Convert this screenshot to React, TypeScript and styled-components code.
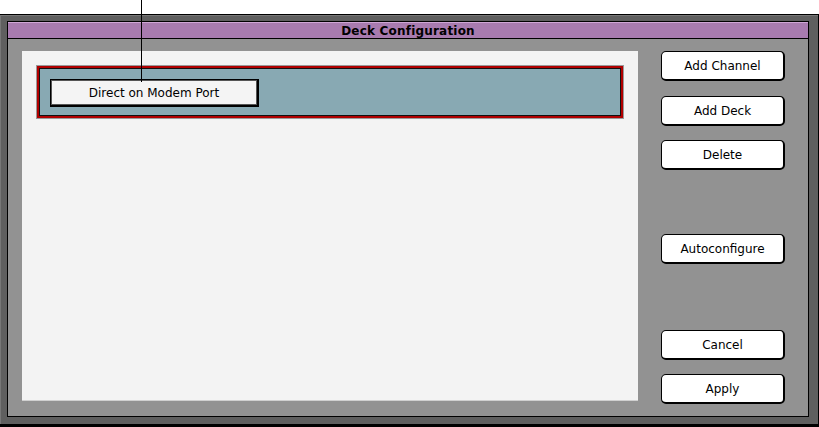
import React from "react";
import styled, { createGlobalStyle } from "styled-components";

const Global = createGlobalStyle`
  html, body { margin: 0; padding: 0; background: #ffffff; }
  body { font-family: "DejaVu Sans", "Liberation Sans", sans-serif; }
  * { box-sizing: border-box; }
`;

const Page = styled.div`
  position: relative;
  width: 819px;
  height: 427px;
  padding-top: 14px;
  overflow: hidden;
`;

const Callout = styled.div`
  position: absolute;
  left: 141px;
  top: 0;
  width: 1px;
  height: 82px;
  background: #000;
  z-index: 2;
`;

const OuterFrame = styled.div`
  width: 819px;
  height: 413px;
  background: #5f5f5f;
  border-top: 1px solid #000;
  border-right: 1px solid #000;
  border-bottom: 3px solid #000;
  padding: 6px 9px 7px 7px;
  box-shadow: inset 1px 0 0 #777, inset 0 1px 0 #777;
`;

const Window = styled.div`
  height: 100%;
  border: 1px solid #000;
  display: flex;
  flex-direction: column;
  background: #929292;
`;

const TitleBar = styled.div`
  height: 19px;
  background: #a87baf;
  border-top: 1px solid #cfa6d6;
  border-bottom: 1px solid #000;
  display: flex;
  align-items: center;
  justify-content: center;
  font-weight: bold;
  font-size: 12px;
  color: #000;
  letter-spacing: 0.2px;
`;

const Body = styled.div`
  flex: 1;
  display: flex;
  padding: 12px 22px 12px 14px;
  gap: 23px;
`;

const ListPanel = styled.div`
  width: 616px;
  height: 350px;
  background: #f3f3f3;
  border-bottom: 1px solid #d0d0d0;
  padding: 14px;
`;

const ChannelRow = styled.div`
  border: 1px solid #9a9a9a;
  background: #b00000;
  padding: 2px;
`;

const ChannelInner = styled.div`
  border: 1px solid #111;
  background: #88a9b3;
  padding: 10px 10px 7px 10px;
  height: 48px;
`;

const DeckButton = styled.div`
  width: 209px;
  height: 28px;
  background: #f4f4f4;
  border: 1px solid #000;
  border-right-width: 2px;
  border-bottom-width: 2px;
  box-shadow: inset 0 0 0 1px #555;
  display: flex;
  align-items: center;
  justify-content: center;
  font-size: 12px;
  color: #000;
`;

const ButtonColumn = styled.div`
  width: 124px;
  display: flex;
  flex-direction: column;
`;

const MacButton = styled.div<{ $mt: number }>`
  margin-top: ${(p) => p.$mt}px;
  height: 30px;
  background: #ffffff;
  border: 1px solid #000;
  border-bottom-width: 2px;
  border-right-width: 2px;
  border-radius: 5px;
  display: flex;
  align-items: center;
  justify-content: center;
  font-size: 12px;
  color: #000;
`;

const buttons: { label: string; mt: number }[] = [
  { label: "Add Channel", mt: 0 },
  { label: "Add Deck", mt: 15 },
  { label: "Delete", mt: 14 },
  { label: "Autoconfigure", mt: 64 },
  { label: "Cancel", mt: 66 },
  { label: "Apply", mt: 14 },
];

export default function App() {
  return (
    <>
      <Global />
      <Page>
        <Callout />
        <OuterFrame>
          <Window>
            <TitleBar>Deck Configuration</TitleBar>
            <Body>
              <ListPanel>
                <ChannelRow>
                  <ChannelInner>
                    <DeckButton>Direct on Modem Port</DeckButton>
                  </ChannelInner>
                </ChannelRow>
              </ListPanel>
              <ButtonColumn>
                {buttons.map((b) => (
                  <MacButton key={b.label} $mt={b.mt}>
                    {b.label}
                  </MacButton>
                ))}
              </ButtonColumn>
            </Body>
          </Window>
        </OuterFrame>
      </Page>
    </>
  );
}
